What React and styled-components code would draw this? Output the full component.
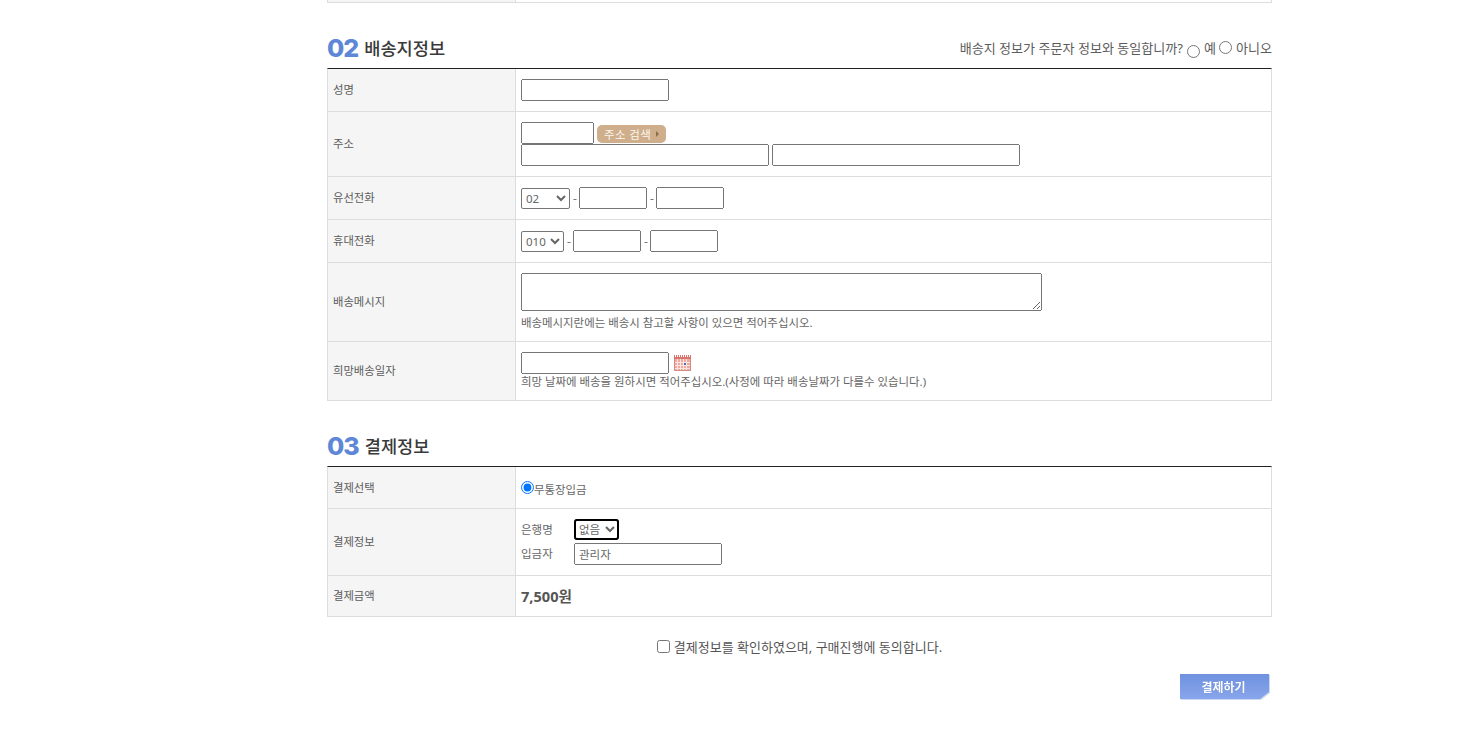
import React from 'react';
import styled, { createGlobalStyle } from 'styled-components';

const GlobalStyle = createGlobalStyle`
  html, body {
    margin: 0;
    padding: 0;
    background: #fff;
    height: 743px;
    overflow: hidden;
  }
  body {
    font-family: 'Noto Sans', 'Noto Sans CJK KR', sans-serif;
    font-size: 12px;
    color: #555;
  }
  input, select, textarea {
    font-family: 'Noto Sans', 'Noto Sans CJK KR', sans-serif;
    font-size: 11.5px;
    color: #666;
    box-sizing: border-box;
  }
`;

const Page = styled.div`
  width: 945px;
  margin-left: 327px;
`;

const Table = styled.div`
  border-top: ${(p) => (p.$dark ? '1px solid #222' : 'none')};
  border-left: 1px solid #ddd;
  border-right: 1px solid #ddd;
`;

const Row = styled.div`
  display: grid;
  grid-template-columns: 188px 1fr;
  height: ${(p) => p.$h}px;
  border-bottom: 1px solid #ddd;
  box-sizing: content-box;
`;

const Label = styled.div`
  display: flex;
  align-items: center;
  padding-left: 5px;
  background: #f5f5f5;
  border-right: 1px solid #ddd;
  font-size: 11.35px;
  line-height: 16px;
  color: #5c5c5c;
`;

const Cell = styled.div`
  padding: ${(p) => p.$top || 10}px 5px 0;
  min-width: 0;
`;

const Line = styled.div`
  display: flex;
  align-items: ${(p) => p.$align || 'center'};
  gap: ${(p) => p.$gap ?? 3}px;
  margin-top: ${(p) => p.$mt || 0}px;
`;

const Heading = styled.div`
  display: flex;
  justify-content: space-between;
  align-items: center;
  height: ${(p) => p.$h}px;
  padding-top: ${(p) => p.$pt}px;
  box-sizing: border-box;
`;

const HeadingLeft = styled.div`
  display: flex;
  align-items: center;
  gap: 6px;
`;

const Num = styled.span`
  margin-top: 1px;
  font-family: 'Inter', sans-serif;
  font-size: 25px;
  line-height: 24px;
  font-weight: 800;
  letter-spacing: -1px;
  color: #5f87d8;
`;

const Title = styled.span`
  font-family: 'Noto Sans CJK KR', sans-serif;
  font-size: 17.6px;
  font-weight: 500;
  color: #3a3a3a;
`;

const SameAsBuyer = styled.div`
  display: flex;
  align-items: center;
  font-size: 13.05px;
  color: #5c5c5c;
  line-height: 18px;
`;

const HeadRadio = styled.input.attrs({ type: 'radio' })`
  margin: ${(p) => p.$mt || 0}px 4px 0 ${(p) => p.$ml}px;
  width: 13px;
  height: 13px;
`;

const TextInput = styled.input.attrs({ type: 'text' })`
  width: ${(p) => p.$w}px;
  height: 22px;
  margin: 0;
  padding: 1px 3px;
  display: block;
`;

const Select = styled.select`
  width: ${(p) => p.$w}px;
  height: 21px;
  margin: 0;
  padding: 0;
  display: block;
  background: #fff;
  outline: ${(p) => (p.$focused ? '2px solid #000' : 'none')};
  outline-offset: -2px;
  border-radius: ${(p) => (p.$focused ? '3px' : '2px')};
`;

const Dash = styled.span`
  width: 3px;
  font-size: 12px;
  color: #777;
`;

const PostButton = styled.span`
  display: flex;
  align-items: center;
  width: 69px;
  height: 18px;
  margin-top: 1px;
  padding-left: 7px;
  box-sizing: border-box;
  background: #cfae8b;
  border-radius: 5px;
  color: #fbf6ef;
  font-size: 11.5px;
  letter-spacing: 0.35px;
  white-space: nowrap;
`;

const Arrow = styled.i`
  width: 0;
  height: 0;
  margin-left: 5px;
  border-left: 3px solid #8a6d4d;
  border-top: 3px solid transparent;
  border-bottom: 3px solid transparent;
`;

const Memo = styled.textarea`
  display: block;
  width: 521px;
  height: 38px;
  margin: 0;
`;

const Hint = styled.div`
  font-size: 11.45px;
  line-height: 16px;
  color: #666;
  white-space: nowrap;
  margin-top: ${(p) => p.$mt || 0}px;
`;

const BankName = styled.span`
  width: 53px;
  padding-bottom: ${(p) => p.$pb}px;
  font-size: 11.5px;
  color: #666;
`;

const PayRadio = styled.input.attrs({ type: 'radio' })`
  margin: 0 0 4px;
  width: 13px;
  height: 13px;
`;

const Amount = styled.div`
  font-size: 14.6px;
  font-weight: 700;
  line-height: 20px;
  color: #555;
`;

const Agree = styled.label`
  display: flex;
  justify-content: center;
  align-items: center;
  gap: 4px;
  height: 20px;
  margin-top: 19px;
  font-size: 13px;
  color: #555;
  input {
    margin: 0;
    width: 13px;
    height: 13px;
  }
`;

const Actions = styled.div`
  display: flex;
  justify-content: flex-end;
  padding-right: 3px;
  margin-top: 18px;
`;

const PayShadow = styled.div`
  filter: drop-shadow(1px 1px 0 #cdd9f3);
`;

const PayButton = styled.button`
  display: block;
  width: 89px;
  height: 25px;
  padding: 0 2px 1px 0;
  border: 0;
  background: linear-gradient(#6f91df, #88a6eb);
  clip-path: polygon(0 0, 100% 0, 100% 72%, 90% 100%, 0 100%);
  color: #fff;
  font-family: 'Noto Sans CJK KR', sans-serif;
  font-size: 12px;
  font-weight: 700;
  text-shadow: 0 0 1px #4f73c4;
`;

const Calendar = () => (
  <svg width="17" height="16" viewBox="0 0 17 16">
    <rect x="0" y="2" width="17" height="14" fill="#eeaaa1" />
    <path d="M0 1.5h17" stroke="#d9746c" strokeWidth="3" strokeDasharray="1 1" />
    <rect x="0" y="2" width="17" height="2" fill="#d9746c" />
    <path d="M0 7.5h17M0 10.5h17M0 13.5h17M3.5 4v12M6.5 4v12M9.5 4v12M12.5 4v12" stroke="#fbe6e2" />
    <rect x="10" y="8" width="2" height="2" fill="#4d6fb0" />
    <path d="M0.5 4v11.5h16V4" fill="none" stroke="#d98a82" />
  </svg>
);

export default function App() {
  return (
    <Page>
      <GlobalStyle />
      <Table>
        <Row $h={2}>
          <Label />
          <div />
        </Row>
      </Table>

      <Heading $h={65} $pt={24}>
        <HeadingLeft>
          <Num>02</Num>
          <Title>배송지정보</Title>
        </HeadingLeft>
        <SameAsBuyer>
          배송지 정보가 주문자 정보와 동일합니까?
          <HeadRadio $mt={8} $ml={4} name="same" />예
          <HeadRadio $ml={3} name="same" />아니오
        </SameAsBuyer>
      </Heading>

      <Table $dark>
        <Row $h={42}>
          <Label>성명</Label>
          <Cell>
            <TextInput $w={148} />
          </Cell>
        </Row>
        <Row $h={64}>
          <Label>주소</Label>
          <Cell>
            <Line>
              <TextInput $w={73} />
              <PostButton>
                주소 검색
                <Arrow />
              </PostButton>
            </Line>
            <Line>
              <TextInput $w={248} />
              <TextInput $w={248} />
            </Line>
          </Cell>
        </Row>
        <Row $h={42}>
          <Label>유선전화</Label>
          <Cell>
            <Line>
              <Select $w={49} defaultValue="02">
                <option>02</option>
              </Select>
              <Dash>-</Dash>
              <TextInput $w={68} />
              <Dash>-</Dash>
              <TextInput $w={68} />
            </Line>
          </Cell>
        </Row>
        <Row $h={42}>
          <Label>휴대전화</Label>
          <Cell>
            <Line>
              <Select $w={43} defaultValue="010">
                <option>010</option>
              </Select>
              <Dash>-</Dash>
              <TextInput $w={68} />
              <Dash>-</Dash>
              <TextInput $w={68} />
            </Line>
          </Cell>
        </Row>
        <Row $h={78}>
          <Label>배송메시지</Label>
          <Cell>
            <Memo />
            <Hint $mt={4}>배송메시지란에는 배송시 참고할 사항이 있으면 적어주십시오.</Hint>
          </Cell>
        </Row>
        <Row $h={58}>
          <Label>희망배송일자</Label>
          <Cell>
            <Line $gap={5}>
              <TextInput $w={148} />
              <Calendar />
            </Line>
            <Hint>희망 날짜에 배송을 원하시면 적어주십시오.(사정에 따라 배송날짜가 다를수 있습니다.)</Hint>
          </Cell>
        </Row>
      </Table>

      <Heading $h={65} $pt={24}>
        <HeadingLeft>
          <Num>03</Num>
          <Title>결제정보</Title>
        </HeadingLeft>
      </Heading>

      <Table $dark>
        <Row $h={41}>
          <Label>결제선택</Label>
          <Cell $top={14}>
            <Line $gap={0}>
              <PayRadio defaultChecked name="pay" />
              <Hint>무통장입금</Hint>
            </Line>
          </Cell>
        </Row>
        <Row $h={66}>
          <Label>결제정보</Label>
          <Cell $top={10}>
            <Line $gap={0}>
              <BankName $pb={1}>은행명</BankName>
              <Select $w={45} $focused defaultValue="none">
                <option value="none">없음</option>
              </Select>
            </Line>
            <Line $gap={0} $mt={3}>
              <BankName $pb={3}>입금자</BankName>
              <TextInput $w={148} defaultValue="관리자" />
            </Line>
          </Cell>
        </Row>
        <Row $h={40}>
          <Label>결제금액</Label>
          <Cell $top={10}>
            <Amount>7,500원</Amount>
          </Cell>
        </Row>
      </Table>

      <Agree>
        <input type="checkbox" />
        결제정보를 확인하였으며, 구매진행에 동의합니다.
      </Agree>

      <Actions>
        <PayShadow>
          <PayButton>결제하기</PayButton>
        </PayShadow>
      </Actions>
    </Page>
  );
}
